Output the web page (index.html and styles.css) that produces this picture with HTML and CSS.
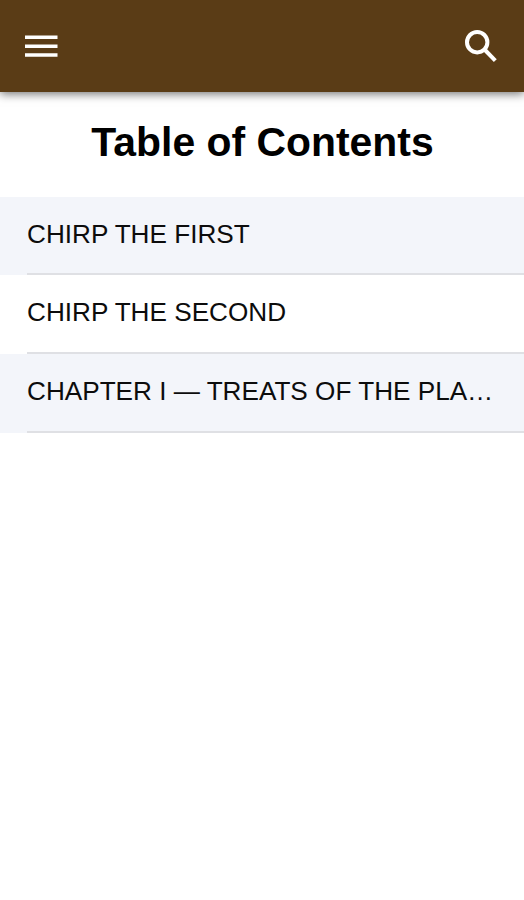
FILE: index.html
```html
<!DOCTYPE html>
<html lang="en">
<head>
<meta charset="utf-8">
<title>Table of Contents</title>
<link rel="stylesheet" href="styles.css">
</head>
<body>
<header class="toolbar">
  <button class="icon-button" aria-label="Menu"><svg class="icon" viewBox="0 0 44 44"><path d="M6 13.3h32.5M6 22.2h32.5M6 31.1h32.5"/></svg></button>
  <button class="icon-button" aria-label="Search"><svg class="icon icon-search" viewBox="0 0 44 44"><circle cx="18.2" cy="18.2" r="10.2"/><path d="M25.5 25.5L36.3 36.6"/></svg></button>
</header>
<main>
  <h1 class="title">Table of Contents</h1>
  <ul class="list">
    <li class="item"><span class="label">CHIRP THE FIRST</span></li>
    <li class="item"><span class="label">CHIRP THE SECOND</span></li>
    <li class="item"><span class="label">CHAPTER I — TREATS OF THE PLA…</span></li>
  </ul>
</main>
</body>
</html>
```
FILE: styles.css
```css
* { box-sizing: border-box; }
body { margin: 0; background: #fff; color: #000; font-family: "Liberation Sans", Arial, sans-serif; }
.toolbar { display: flex; justify-content: space-between; align-items: center; height: 92px; padding: 0 21px 0 19px; background: #5a3c16; box-shadow: 0 2px 9px rgba(0, 0, 0, .55); }
.icon-button { display: flex; padding: 0; border: 0; background: none; }
.icon { width: 44px; height: 44px; fill: none; stroke: #fff; stroke-width: 3.5; }
.icon-search { stroke-width: 4; }
.title { margin: 0; height: 105px; padding: 27px 0 0 1px; text-align: center; font-size: 40.9px; line-height: 47px; }
.list { margin: 0; padding: 0; list-style: none; }
.item { height: 79px; padding-left: 27px; }
.item:first-child { height: 78px; }
.item:nth-child(odd) { background: #f3f5fa; }
.label { display: block; height: 100%; border-bottom: 2px solid #dfe0e4; color: #0c0c0c; font-size: 26.15px; line-height: 74px; white-space: nowrap; }
```
